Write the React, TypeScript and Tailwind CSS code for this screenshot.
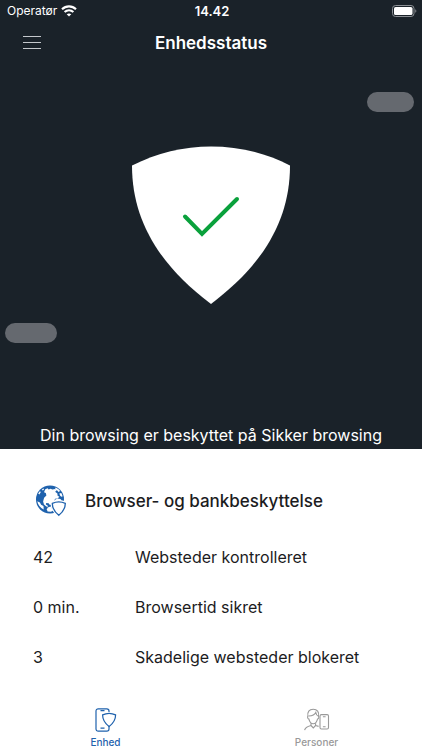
import { useState } from 'react';

interface Stat {
  value: string;
  label: string;
}

const stats: Stat[] = [
  { value: '42', label: 'Websteder kontrolleret' },
  { value: '0 min.', label: 'Browsertid sikret' },
  { value: '3', label: 'Skadelige websteder blokeret' },
];

function WifiIcon() {
  return (
    <svg width="16" height="12" viewBox="0 0 16 12" fill="none" stroke="currentColor" strokeWidth="2.1">
      <path d="M1 4.3C5 .4 11 .4 15 4.3" />
      <path d="M3.6 7.1c2.6-2.4 6.2-2.4 8.8 0" />
      <path d="M8 11.6 5.7 9.3c1.3-1.2 3.3-1.2 4.6 0z" fill="currentColor" stroke="none" />
    </svg>
  );
}

function BatteryIcon() {
  return (
    <svg width="25" height="12" viewBox="0 0 25 12" fill="none">
      <rect x="0.5" y="0.5" width="21.5" height="11" rx="3" stroke="#8b8f94" />
      <rect x="2" y="2" width="18.5" height="8" rx="1.6" fill="#fff" />
      <path d="M23.3 4.2c1.4.6 1.4 3 0 3.6z" fill="#8b8f94" />
    </svg>
  );
}

function ShieldCheck() {
  return (
    <svg width="158" height="158" viewBox="0 0 158 158" fill="none" role="img" aria-label="Beskyttet">
      <path d="M0 19.5C49-6 109-6 158 19.5C158 74 131 119 79 158C27 119 0 74 0 19.5z" fill="#fff" />
      <path d="M53 70.5 70 88 105 53" stroke="#0aa13c" strokeWidth="4" strokeLinecap="round" />
    </svg>
  );
}

function GlobeShieldIcon() {
  return (
    <svg width="32" height="32" viewBox="0 0 32 32" fill="none">
      <circle cx="15" cy="14.5" r="14" fill="#1f62ad" />
      {/* land */}
      <g fill="#fff">
        <path d="M10.300 4.200l2.300-.9 1 1.300 2-.9 1.800.8 2.800-.6 1.500 1.600-1.600 1.300 2.300 1.600.2 2.300 1.800 1.100-1.800 1.600-2.500.4-1 2.300-2 1.300-.8 2-1.400.5-1.300-1.600-2.400-.2-.3 1.500 1.700.9.6 1.300-1.900-.3-2.300-1.900-.9-3.200 1-3.600 2.300-2.200-.6-2.600-1.800-.8z" />
        <path d="M3.200 8.600l1.700-2.300.9.7-1.400 2.500z" />
        <path d="M6.800 4.700l1.500-1.100.8.6-1.200 1.200z" />
        <path d="M20.500 2.600c2 .8 3.400 1.900 4.600 3.400l-1.600.9-1.500-1.600-1.900-.8z" />
        <path d="M24.300 8.400l2-.5 1.100 2.500-.2 1.600-1.900-.9z" />
        <path d="M2.300 16.300l2.600 1.200 1.200 2.300 2.400 1.300.2 3.300C5.300 23 2.800 19.700 2.300 16.300z" />
        <path d="M12.700 22.400l2.800-.8 1.200 1.400 1.400 2.800-2.200 1-3.300-.3-.8-1.900z" />
        <path d="M19.300 15.200l3-1.600 3.100.3 1.400 1.700-2.600.9-4.300.3z" />
      </g>
      <path
        d="M16.800 18c4.200-2 9.800-2 14 0 0 5.400-2.600 9.200-7 12.600-4.400-3.400-7-7.200-7-12.600z"
        fill="#fff"
        stroke="#fff"
        strokeWidth="2.600"
      />
      <path
        d="M17.300 18.400c4-1.900 9-1.900 13 0 0 5-2.400 8.600-6.500 11.900-4.100-3.300-6.500-6.900-6.500-11.900z"
        fill="#fff"
        stroke="#1f62ad"
        strokeWidth="1.300"
      />
    </svg>
  );
}

function DeviceIcon() {
  return (
    <svg width="22" height="24" viewBox="0 0 22 24" fill="none" stroke="currentColor" strokeWidth="1.200">
      <path d="M14 4V3a2.200 2.200 0 0 0-2.200-2.200H3.200A2.200 2.200 0 0 0 1 3v18a2.200 2.200 0 0 0 2.200 2.200h8.600A2.200 2.200 0 0 0 14 21v-3" />
      <path d="M5.500 2.700h4M5.500 20.200h4" />
      <path d="M7.600 6.900c4-2 9-2 13 0 0 5-2.500 8.500-6.500 11.500-4-3-6.500-6.500-6.500-11.500z" />
    </svg>
  );
}

function PeopleIcon() {
  return (
    <svg width="26" height="24" viewBox="0 0 26 24" fill="none" stroke="currentColor" strokeWidth="1.100">
      <path d="M4 8.300C3 4 5.300 1.200 9.200 1.200s6.300 2.800 5.200 7.100" />
      <path d="M4.800 8c3.600-.2 6-1.400 7-3.500.3 1.800 1.100 3 2.400 3.600" />
      <path d="M4.300 8c-1.200.4-.8 3 .6 3.100.7 2.900 2.300 4.600 4.300 4.600s3.600-1.700 4.300-4.600c1.400-.1 1.800-2.700.6-3.100" />
      <path d="M7 15.200v2.300c-3.600.9-5.900 2-6.400 4.700M7 17.500l2.300 2.400 2.300-2.400v-2.300M11.600 17.500l3 .9" />
      <rect x="16" y="6.600" width="8.500" height="14.400" rx="1.400" />
      <path d="M18.900 8.800h2.700M18.900 18.800h2.700" />
    </svg>
  );
}

export default function App() {
  const [tab, setTab] = useState('enhed');

  return (
    <div className="flex min-h-screen flex-col bg-white font-['Inter','Liberation_Sans',sans-serif] text-[#1c1c1e]">
      <section className="relative bg-[#1a2229] text-white">
        <div className="grid grid-cols-3 items-center pt-px pr-[5px] pl-[7px] text-xs leading-5">
          <div className="flex items-center gap-1">
            <span>Operatør</span>
            <WifiIcon />
          </div>
          <span className="text-center text-[13px] font-semibold">14.42</span>
          <div className="flex justify-end">
            <BatteryIcon />
          </div>
        </div>

        <header className="grid grid-cols-[40px_1fr_40px] items-center px-3 pt-0.5">
          <button type="button" aria-label="Menu" className="flex h-10 items-center justify-center text-[#c4c8cc]">
            <svg width="18" height="14" viewBox="0 0 18 14" stroke="currentColor" strokeWidth="1">
              <path d="M0 .5h18M0 6.500h18M0 12.500h18" />
            </svg>
          </button>
          <h1 className="text-center text-[17px] leading-6 font-semibold">Enhedsstatus</h1>
        </header>

        <div className="flex justify-center pt-[83px] pb-[119px]">
          <ShieldCheck />
        </div>

        {/* floating particles around the shield */}
        <span className="absolute top-[92px] right-2 h-5 w-[47px] rounded-full bg-[#65696f]" />
        <span className="absolute top-[323px] left-[5px] h-5 w-[52px] rounded-full bg-[#65696f]" />

        <p className="pb-0.5 text-center text-base">Din browsing er beskyttet på Sikker browsing</p>
      </section>

      <main className="px-[33px] pt-9">
        <div className="flex items-center gap-[18px] pl-0.5">
          <GlobeShieldIcon />
          <h2 className="text-[17px] leading-6 font-medium">Browser- og bankbeskyttelse</h2>
        </div>

        <dl className="mt-7 flex flex-col gap-[26px] text-base">
          {stats.map((stat) => (
            <div key={stat.label} className="flex">
              <dt className="order-2">{stat.label}</dt>
              <dd className="w-[102px]">{stat.value}</dd>
            </div>
          ))}
        </dl>
      </main>

      <nav className="mt-auto grid grid-cols-2 pb-0.5 text-[10px] leading-3 font-medium">
        <button
          type="button"
          onClick={() => setTab('enhed')}
          className={`flex flex-col items-center gap-1 ${tab === 'enhed' ? 'text-[#1f62ad]' : 'text-[#999999]'}`}
        >
          <DeviceIcon />
          Enhed
        </button>
        <button
          type="button"
          onClick={() => setTab('personer')}
          className={`flex flex-col items-center gap-1 ${tab === 'personer' ? 'text-[#1f62ad]' : 'text-[#999999]'}`}
        >
          <PeopleIcon />
          Personer
        </button>
      </nav>
    </div>
  );
}
